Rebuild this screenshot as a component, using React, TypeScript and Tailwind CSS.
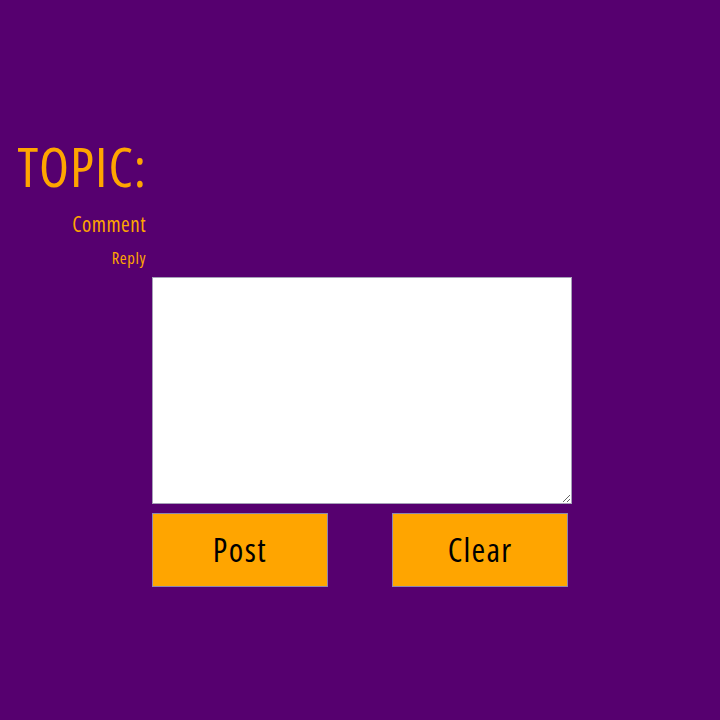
export default function App() {
  return (
    <div
      className="w-[720px] h-[720px] bg-[#56006f] pt-[134px] [font-stretch:75%]"
      style={{ fontFamily: '"Open Sans", "Noto Sans", sans-serif' }}
    >
      <div className="w-[146px] text-right text-[#ffa500]">
        <h1 className="text-[55px] leading-[64px] tracking-[1px] mr-[-1px]">TOPIC:</h1>
        <p className="text-[21px] leading-[28px] mt-[12px] tracking-[0.5px]">Comment</p>
        <p className="text-[16.5px] leading-[22px] mt-[9px] tracking-[0.6px]">Reply</p>
      </div>
      <div className="ml-[152px] mt-[8px] flex flex-col">
        <textarea className="block w-[420px] h-[227px] bg-white border border-[#a6a0b8] resize" />
        <div className="flex gap-[64px] mt-[9px]">
          <button className="w-[176px] h-[74px] bg-[#ffa500] border border-[#8c86b0] text-black text-[33px] tracking-[1.5px]">
            Post
          </button>
          <button className="w-[176px] h-[74px] bg-[#ffa500] border border-[#8c86b0] text-black text-[33px] tracking-[1.2px]">
            Clear
          </button>
        </div>
      </div>
    </div>
  );
}
